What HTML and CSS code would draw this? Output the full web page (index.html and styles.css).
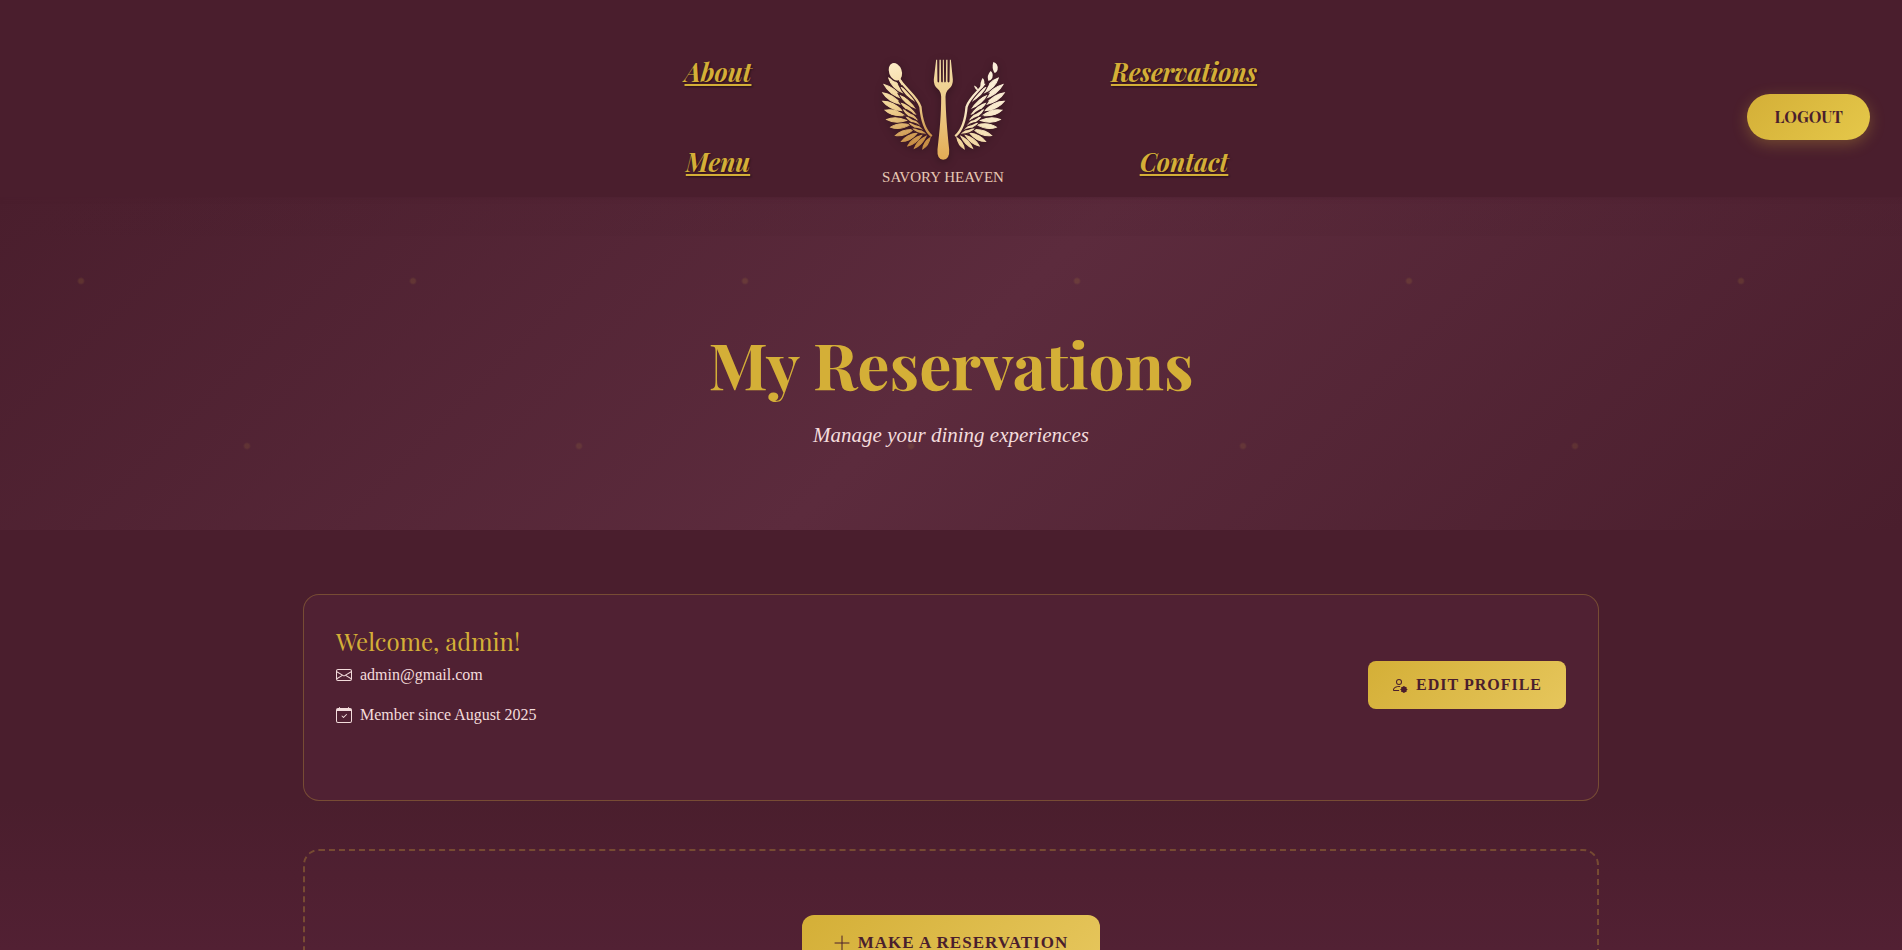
FILE: index.html
```html
<!DOCTYPE html>
<html lang="en">
<head>
<meta charset="utf-8">
<title>My Reservations | Savory Heaven</title>
<link rel="stylesheet" href="styles.css">
</head>
<body>
<header class="site-header">
  <nav class="site-nav" aria-label="Main">
    <div class="nav-column">
      <a href="#about">About</a>
      <a href="#menu">Menu</a>
    </div>
    <a class="brand" href="#home">
      <svg class="brand-mark" viewBox="60 50 380 320" aria-hidden="true">
        <defs>
          <linearGradient id="goldL" x1="0" y1="0" x2="0.2" y2="1">
            <stop offset="0" stop-color="#fff0cf"/><stop offset="0.55" stop-color="#f0d293"/><stop offset="1" stop-color="#c98f45"/>
          </linearGradient>
          <linearGradient id="goldR" x1="0" y1="1" x2="0.4" y2="0">
            <stop offset="0" stop-color="#f0cf8e"/><stop offset="0.5" stop-color="#f8e8c6"/><stop offset="1" stop-color="#fbeeda"/>
          </linearGradient>
          <linearGradient id="goldF" x1="0" y1="0" x2="0" y2="1">
            <stop offset="0" stop-color="#f2dca6"/><stop offset="0.5" stop-color="#ecc985"/><stop offset="1" stop-color="#e3ac55"/>
          </linearGradient>
          <g id="wing" fill="#fff">
            <path d="M86 116Q115 126 128 160Q95 146 86 116ZM72 135Q104 143 128 178Q88 165 72 135ZM68 160Q99 164 125 196Q85 188 68 160ZM68 185Q100 185 128 214Q88 211 68 185ZM75 212Q104 206 133 228Q96 232 75 212ZM80 240Q107 228 140 243Q105 254 80 240ZM92 263Q115 247 150 256Q119 273 92 263ZM106 288Q126 268 160 270Q134 292 106 288ZM124 306Q139 284 172 280Q151 306 124 306ZM143 319Q154 296 185 287Q168 314 143 319ZM163 326Q171 303 198 290Q185 317 163 326ZM188 328Q190 307 210 294Q206 317 188 328Z" stroke="#fff" stroke-width="3"/>
            <path d="M116 136Q151 152 170 192Q131 172 116 136ZM114 162Q149 174 172 212Q131 198 114 162ZM117 186Q152 193 174 230Q134 219 117 186ZM124 206Q158 212 178 246Q140 238 124 206ZM132 229Q164 231 184 260Q149 256 132 229ZM142 248Q172 246 192 272Q159 271 142 248ZM152 266Q181 262 202 284Q171 286 152 266Z" stroke="#000" stroke-width="3"/>
            <path d="M118 120C136 148 172 172 181 202C184 236 190 268 213 288" fill="none" stroke="#000" stroke-width="13"/>
            <path d="M118 120C136 148 172 172 181 202C184 236 190 268 213 288" fill="none" stroke="#fff" stroke-width="7" stroke-linecap="round"/>
          </g>
          <mask id="maskL" maskUnits="userSpaceOnUse" x="60" y="50" width="190" height="320">
            <use href="#wing"/>
            <ellipse cx="106" cy="97" rx="23" ry="31" transform="rotate(-20 106 97)" fill="#000"/>
            <ellipse cx="106" cy="97" rx="19" ry="27" transform="rotate(-20 106 97)" fill="#fff"/>
            <path d="M114 112L128 136" stroke="#fff" stroke-width="7"/>
          </mask>
          <mask id="maskR" maskUnits="userSpaceOnUse" x="250" y="50" width="190" height="320">
            <use href="#wing" transform="translate(500 0) scale(-1 1)"/>
            <circle cx="378" cy="122" r="12" fill="#000"/>
            <g fill="#fff">
              <path d="M399 68Q414 72 412 90Q409 100 402 100Q394 86 399 68Z"/>
              <path d="M391 95Q400 101 396 116Q391 125 384 124Q379 108 391 95Z"/>
              <path d="M367 116Q375 123 371 138Q367 147 361 148Q358 130 367 116Z"/>
              <path d="M341 138Q352 141 354 153Q346 153 341 138Z"/>
            </g>
          </mask>
        </defs>
        <rect x="60" y="60" width="160" height="275" fill="url(#goldL)" mask="url(#maskL)"/>
        <rect x="280" y="60" width="160" height="275" fill="url(#goldR)" mask="url(#maskR)"/>
        <path fill="url(#goldF)" d="M228 61L231 61L232 126Q235 132 237 126L238 61L242 61L243 126Q246 132 248 126L248 61L251 61L252 126Q254 132 257 126L258 61L262 61L262 126Q265 132 268 126L269 61L272 61L278 120Q279 138 266 149Q256 158 256 172C257 225 261 270 267 330Q269 360 249 360Q230 360 232 330C239 270 243 225 243 172Q243 158 233 149Q220 138 221 120Z"/>
      </svg>
      <span class="brand-name">SAVORY HEAVEN</span>
    </a>
    <div class="nav-column">
      <a href="#reservations">Reservations</a>
      <a href="#contact">Contact</a>
    </div>
  </nav>
  <button class="logout" type="button">LOGOUT</button>
</header>

<section class="hero">
  <h1>My Reservations</h1>
  <p>Manage your dining experiences</p>
</section>

<main class="content">
  <section class="card profile">
    <div>
      <h2>Welcome, admin!</h2>
      <p class="detail">
        <svg class="icon" viewBox="0 0 16 16" aria-hidden="true"><path d="M0 4a2 2 0 0 1 2-2h12a2 2 0 0 1 2 2v8a2 2 0 0 1-2 2H2a2 2 0 0 1-2-2zm2-1a1 1 0 0 0-1 1v.217l7 4.2 7-4.2V4a1 1 0 0 0-1-1zm13 2.383-4.708 2.825L15 11.105zm-.034 6.876-5.64-3.471L8 9.583l-1.326-.795-5.64 3.47A1 1 0 0 0 2 13h12a1 1 0 0 0 .966-.741M1 11.105l4.708-2.897L1 5.383z"/></svg>
        admin@gmail.com
      </p>
      <p class="detail">
        <svg class="icon" viewBox="0 0 16 16" aria-hidden="true"><path d="M10.854 7.146a.5.5 0 0 1 0 .708l-3 3a.5.5 0 0 1-.708 0l-1.500-1.500a.5.5 0 1 1 .708-.708L7.500 9.793l2.646-2.647a.5.5 0 0 1 .708 0"/><path d="M3.500 0a.5.5 0 0 1 .5.5V1h8V.5a.5.5 0 0 1 1 0V1h1a2 2 0 0 1 2 2v11a2 2 0 0 1-2 2H2a2 2 0 0 1-2-2V3a2 2 0 0 1 2-2h1V.5a.5.5 0 0 1 .5-.5M1 4v10a1 1 0 0 0 1 1h12a1 1 0 0 0 1-1V4z"/></svg>
        Member since August 2025
      </p>
    </div>
    <button class="gold-button edit" type="button">
      <svg class="icon" viewBox="0 0 16 16" aria-hidden="true"><path d="M11 5a3 3 0 1 1-6 0 3 3 0 0 1 6 0M8 7a2 2 0 1 0 0-4 2 2 0 0 0 0 4m.256 7a4.500 4.500 0 0 1-.229-1.004H3c.001-.246.154-.986.832-1.664C4.484 10.680 5.711 10 8 10q.39 0 .74.025c.226-.341.496-.65.804-.918Q8.844 9.002 8 9c-5 0-6 3-6 4s1 1 1 1z" transform="translate(-1 0)"/><circle cx="11.900" cy="12.500" r="2.900"/><path d="M11.900 9v7M8.400 12.500h7M9.400 10l5 5M14.400 10l-5 5" stroke="currentColor"/></svg>
      EDIT PROFILE
    </button>
  </section>

  <section class="card booking">
    <button class="gold-button reserve" type="button">
      <svg class="icon" viewBox="0 0 16 16" aria-hidden="true"><path d="M8 1v14M1 8h14" fill="none" stroke="currentColor" stroke-linecap="round"/></svg>
      MAKE A RESERVATION
    </button>
  </section>
</main>
</body>
</html>
```

FILE: styles.css
```css
:root {
  --wine: #4a1e2d;
  --wine-light: #5c2b3d;
  --gold: #d4af37;
  --blush: #f3dcdc;
  --display: "Playfair Display", "Liberation Serif", serif;
  --text: "Liberation Serif", serif;
}

* { box-sizing: border-box; }

body {
  margin: 0;
  color: var(--blush);
  background: linear-gradient(180deg, var(--wine) 0, var(--wine) 800px, #522033 950px);
  font: 16px/24px var(--text);
}

h1, h2, p { margin: 0; }

button {
  font-family: inherit;
  font-weight: bold;
  color: var(--wine);
  border: 0;
  cursor: pointer;
}

.site-header {
  position: relative;
  display: grid;
  grid-template-columns: 1fr auto 1fr;
  align-items: center;
  min-height: 197px;
  padding: 40px 32px 8px;
  background: var(--wine);
  box-shadow: 0 1px 4px rgba(74, 30, 45, 0.6);
}

.site-nav {
  grid-column: 2;
  display: grid;
  grid-template-columns: repeat(3, 233px);
  align-self: stretch;
}

.nav-column {
  display: flex;
  flex-direction: column;
  align-items: center;
  gap: 58px;
  padding-top: 16px;
}

.nav-column a {
  color: var(--gold);
  font-family: var(--display);
  font-size: 25px;
  line-height: 32px;
  font-weight: bold;
  font-style: italic;
  text-underline-offset: 2px;
  text-decoration-thickness: 2px;
  text-shadow: 1px 1px 2px rgba(0, 0, 0, 0.5);
}

.brand {
  display: flex;
  flex-direction: column;
  align-items: center;
  gap: 2px;
  padding: 16px 16px 0 0;
  color: #e8c9b4;
  text-decoration: none;
}

.brand-mark {
  width: 127px;
  height: 107px;
  filter: drop-shadow(0 2px 4px rgba(0, 0, 0, 0.3));
}

.brand-name {
  font-size: 15px;
  line-height: 24px;
}

.logout {
  justify-self: end;
  height: 46px;
  padding: 0 27px;
  margin-top: 4px;
  font-family: var(--display);
  font-size: 16px;
  border-radius: 24px;
  background: linear-gradient(135deg, #d4af37, #e5c84a);
  box-shadow: 0 4px 15px rgba(212, 175, 55, 0.3);
}

.hero {
  min-height: 333px;
  padding: 127px 24px 72px;
  text-align: center;
  background:
    radial-gradient(circle at 83px 84px, rgba(212, 175, 55, 0.13) 2px, transparent 4px) -2px 0 / 332px 332px,
    radial-gradient(circle at 249px 249px, rgba(212, 175, 55, 0.11) 2px, transparent 4px) -2px 0 / 332px 332px,
    linear-gradient(rgba(74, 30, 45, 0.15), rgba(74, 30, 45, 0.15)) 0 0 / 100% 39px no-repeat,
    linear-gradient(135deg, var(--wine), var(--wine-light) 50%, var(--wine));
}

.hero h1 {
  color: var(--gold);
  font-family: var(--display);
  font-size: 64px;
  line-height: 80px;
}

.hero p {
  margin-top: 15px;
  font-size: 21px;
  line-height: 32px;
  font-style: italic;
}

.content {
  max-width: 1344px;
  margin: 0 auto;
  padding: 64px 24px;
}

.card {
  border: 1px solid rgba(212, 175, 55, 0.3);
  border-radius: 16px;
}

.profile {
  display: flex;
  align-items: center;
  justify-content: space-between;
  padding: 31px 32px 57px;
  background: #502133;
}

.profile h2 {
  margin-bottom: 7px;
  color: var(--gold);
  font-family: var(--display);
  font-size: 24px;
  line-height: 30px;
  font-weight: normal;
}

.detail {
  display: flex;
  align-items: center;
  gap: 8px;
  margin-bottom: 16px;
}

.icon {
  flex: none;
  width: 16px;
  height: 16px;
  fill: currentColor;
}

.gold-button {
  display: inline-flex;
  align-items: center;
  gap: 8px;
  letter-spacing: 1px;
  background: linear-gradient(135deg, #d4af37, #e6c65c);
}

.edit {
  height: 48px;
  padding: 0 24px;
  font-size: 16px;
  border-radius: 8px;
}

.booking {
  display: flex;
  justify-content: center;
  margin-top: 48px;
  padding: 64px 32px;
  border: 2px dashed rgba(212, 175, 55, 0.3);
  background: rgba(90, 42, 60, 0.15);
}

.reserve {
  height: 56px;
  padding: 0 32px;
  font-size: 17px;
  border-radius: 12px;
}
```
